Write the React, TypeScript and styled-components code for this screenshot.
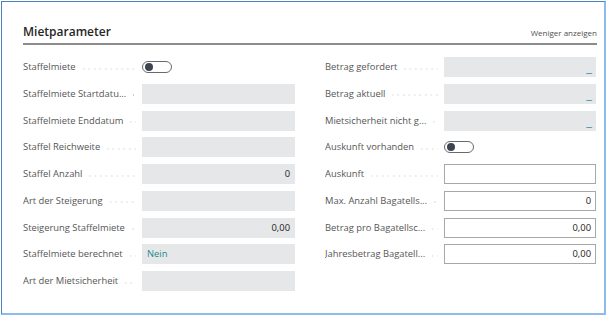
import React from "react";
import styled, { createGlobalStyle } from "styled-components";

const Global = createGlobalStyle`
  html, body { margin: 0; padding: 0; background: #ffffff; }
  body { font-family: "Open Sans", "Noto Sans", sans-serif; }
  * { box-sizing: border-box; }
`;

const Frame = styled.div`
  margin: 1px 0 0 1px;
  width: 605px;
  height: 314px;
  border-left: 1px solid #4a82c3;
  border-top: 1px solid #4a82c3;
  border-right: 2px solid #8dbcec;
  border-bottom: 2px solid #8dbcec;
  background: #ffffff;
  padding: 22px 7px 0 21px;
`;

const Header = styled.div`
  display: flex;
  justify-content: space-between;
  align-items: baseline;
  padding-bottom: 2px;
  border-bottom: 2px solid #8c8c8c;
`;

const Title = styled.h2`
  margin: 0;
  font-size: 12px;
  line-height: 16px;
  font-weight: 600;
  color: #262626;
`;

const MoreLink = styled.span`
  font-size: 8px;
  line-height: 16px;
  color: #505050;
`;

const Columns = styled.div`
  display: grid;
  grid-template-columns: 272px 271px;
  column-gap: 30px;
  margin-top: 12px;
`;

const Column = styled.div`
  display: flex;
  flex-direction: column;
  gap: 6.75px;
`;

const Row = styled.div`
  display: grid;
  grid-template-columns: 119px 1fr;
  height: 20px;
  align-items: center;
`;

const Label = styled.div`
  display: flex;
  align-items: center;
  height: 20px;
  font-size: 9.4px;
  line-height: 20px;
  color: #565656;
  white-space: nowrap;
  overflow: hidden;
  padding-right: 6px;
`;

const Leader = styled.span`
  flex: 1;
  align-self: stretch;
  margin-left: 5px;
  background-image: radial-gradient(circle, #cacaca 0.55px, transparent 0.75px);
  background-size: 5.5px 2px;
  background-repeat: repeat-x;
  background-position: left 10.5px;
`;

const Field = styled.div<{ $variant: "readonly" | "edit" }>`
  height: 20px;
  display: flex;
  align-items: center;
  justify-content: flex-end;
  padding: 0 4px;
  font-size: 9.4px;
  line-height: 20px;
  color: #212121;
  background: ${(p) => (p.$variant === "readonly" ? "#e6e7e8" : "#ffffff")};
  border: 1px solid ${(p) => (p.$variant === "readonly" ? "#e6e7e8" : "#a8a8a8")};
`;

const LinkValue = styled.span`
  color: #1f8a91;
  margin-right: auto;
`;

const Dash = styled.span`
  color: #3596a1;
  font-size: 13px;
  line-height: 20px;
  margin-right: -1px;
`;

const ToggleTrack = styled.div`
  width: 30px;
  height: 12px;
  border: 1px solid #666a70;
  border-radius: 6px;
  display: flex;
  align-items: center;
  padding-left: 2px;
`;

const ToggleKnob = styled.span`
  width: 8px;
  height: 8px;
  border-radius: 50%;
  background: #3d4553;
`;

type Item =
  | { label: string; kind: "toggle" }
  | { label: string; kind: "readonly"; value?: string; link?: boolean; dash?: boolean }
  | { label: string; kind: "edit"; value?: string };

const left: Item[] = [
  { label: "Staffelmiete", kind: "toggle" },
  { label: "Staffelmiete Startdatu...", kind: "readonly" },
  { label: "Staffelmiete Enddatum", kind: "readonly" },
  { label: "Staffel Reichweite", kind: "readonly" },
  { label: "Staffel Anzahl", kind: "readonly", value: "0" },
  { label: "Art der Steigerung", kind: "readonly" },
  { label: "Steigerung Staffelmiete", kind: "readonly", value: "0,00" },
  { label: "Staffelmiete berechnet", kind: "readonly", value: "Nein", link: true },
  { label: "Art der Mietsicherheit", kind: "readonly" },
];

const right: Item[] = [
  { label: "Betrag gefordert", kind: "readonly", dash: true },
  { label: "Betrag aktuell", kind: "readonly", dash: true },
  { label: "Mietsicherheit nicht g...", kind: "readonly", dash: true },
  { label: "Auskunft vorhanden", kind: "toggle" },
  { label: "Auskunft", kind: "edit" },
  { label: "Max. Anzahl Bagatells...", kind: "edit", value: "0" },
  { label: "Betrag pro Bagatellsc...", kind: "edit", value: "0,00" },
  { label: "Jahresbetrag Bagatell...", kind: "edit", value: "0,00" },
];

function FieldRow({ item }: { item: Item }) {
  return (
    <Row>
      <Label>
        {item.label}
        <Leader />
      </Label>
      {item.kind === "toggle" ? (
        <ToggleTrack>
          <ToggleKnob />
        </ToggleTrack>
      ) : item.kind === "readonly" ? (
        <Field $variant="readonly">
          {item.link ? (
            <LinkValue>{item.value}</LinkValue>
          ) : item.dash ? (
            <Dash>_</Dash>
          ) : (
            item.value
          )}
        </Field>
      ) : (
        <Field $variant="edit">{item.value}</Field>
      )}
    </Row>
  );
}

export default function App() {
  return (
    <>
      <Global />
      <Frame>
        <Header>
          <Title>Mietparameter</Title>
          <MoreLink>Weniger anzeigen</MoreLink>
        </Header>
        <Columns>
          <Column>
            {left.map((it) => (
              <FieldRow key={it.label} item={it} />
            ))}
          </Column>
          <Column>
            {right.map((it) => (
              <FieldRow key={it.label} item={it} />
            ))}
          </Column>
        </Columns>
      </Frame>
    </>
  );
}
